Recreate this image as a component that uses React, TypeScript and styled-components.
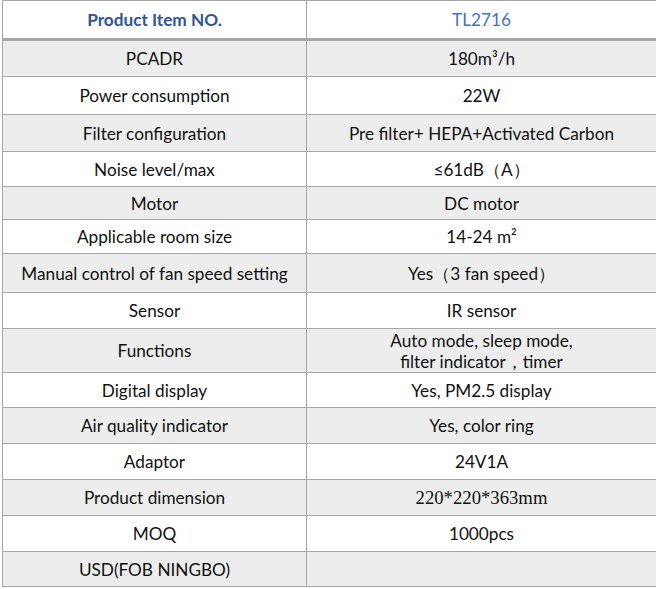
import React from "react";
import styled, { createGlobalStyle } from "styled-components";

const Global = createGlobalStyle`
  html, body { margin: 0; padding: 0; background: #ffffff; }
  body { font-family: Lato, "Open Sans", sans-serif; }
`;

const Wrap = styled.div`
  padding: 0 0 0 2px;
  width: 654px;
`;

const Table = styled.table`
  border-collapse: collapse;
  width: 654px;
  table-layout: fixed;
  font-family: Lato, "Noto Sans", sans-serif;
  font-size: 17.2px;
  color: #111111;
`;

const Row = styled.tr<{ $shade?: boolean; $h: number }>`
  height: ${(p) => p.$h}px;
  background: ${(p) => (p.$shade ? "#ededed" : "#ffffff")};
`;

const Cell = styled.td<{ $serif?: boolean }>`
  border: 1px solid #a6a6a6;
  text-align: center;
  vertical-align: middle;
  padding: 0 4px;
  line-height: 21px;
  font-family: ${(p) => (p.$serif ? '"Liberation Serif", serif' : "inherit")};
  font-size: ${(p) => (p.$serif ? "18.7px" : "inherit")};
`;

const HeadCell = styled.th<{ $bold?: boolean }>`
  border: 1px solid #a6a6a6;
  border-bottom: 3px solid #a6a6a6;
  text-align: center;
  vertical-align: middle;
  font-weight: ${(p) => (p.$bold ? 700 : 400)};
  color: ${(p) => (p.$bold ? "#2f5597" : "#4472c4")};
  padding: 0;
`;

const Col = styled.col<{ $w: number }>`
  width: ${(p) => p.$w}px;
`;

type Item = { k: string; v: React.ReactNode; h: number; serif?: boolean };

const rows: Item[] = [
  { k: "PCADR", v: <>180m³/h</>, h: 37 },
  { k: "Power consumption", v: "22W", h: 38 },
  { k: "Filter configuration", v: "Pre filter+ HEPA+Activated Carbon", h: 37 },
  { k: "Noise level/max", v: "≤61dB（A）", h: 35 },
  { k: "Motor", v: "DC motor", h: 33 },
  { k: "Applicable room size", v: "14-24 m²", h: 34 },
  { k: "Manual control of fan speed setting", v: "Yes（3 fan speed）", h: 39 },
  { k: "Sensor", v: "IR sensor", h: 36 },
  {
    k: "Functions",
    v: (
      <>
        Auto mode, sleep mode,
        <br />
        filter indicator，timer
      </>
    ),
    h: 44,
  },
  { k: "Digital display", v: "Yes, PM2.5 display", h: 35 },
  { k: "Air quality indicator", v: "Yes, color ring", h: 36 },
  { k: "Adaptor", v: "24V1A", h: 36 },
  { k: "Product dimension", v: "220*220*363mm", h: 36, serif: true },
  { k: "MOQ", v: "1000pcs", h: 36 },
  { k: "USD(FOB NINGBO)", v: "", h: 35 },
];

export default function App() {
  return (
    <Wrap>
      <Global />
      <Table>
        <colgroup>
          <Col $w={304} />
          <Col $w={350} />
        </colgroup>
        <thead>
          <Row $h={39}>
            <HeadCell $bold>Product Item NO.</HeadCell>
            <HeadCell>TL2716</HeadCell>
          </Row>
        </thead>
        <tbody>
          {rows.map((r, i) => (
            <Row key={r.k} $h={r.h} $shade={i % 2 === 0}>
              <Cell>{r.k}</Cell>
              <Cell $serif={r.serif}>{r.v}</Cell>
            </Row>
          ))}
        </tbody>
      </Table>
    </Wrap>
  );
}
